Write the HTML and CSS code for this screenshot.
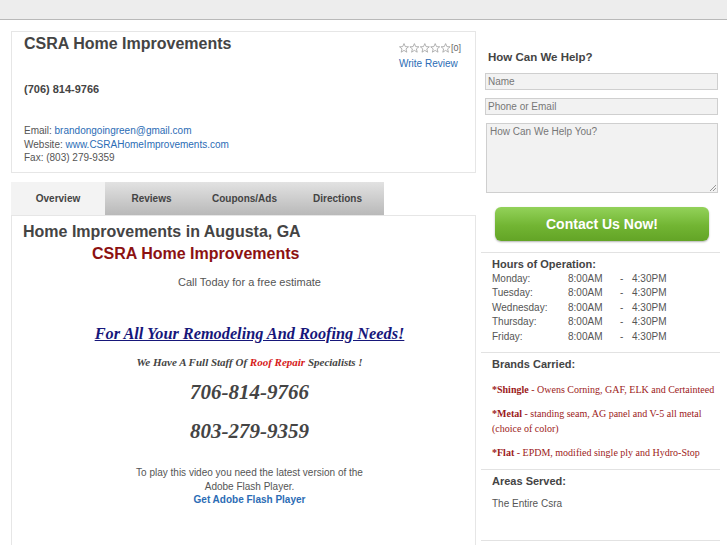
FILE: index.html
```html
<!DOCTYPE html>
<html>
<head>
<meta charset="utf-8">
<link rel="stylesheet" href="styles.css">
</head>
<body>
<div class="topbar"></div>
<div class="page">
  <div class="main">
    <div class="biz-box">
      <div class="biz-head">
        <h1 class="biz-title">CSRA Home Improvements</h1>
        <div class="rating">
          <div class="stars-row">
            <svg class="stars" width="52" height="10" viewBox="0 0 52 10">
              <g fill="none" stroke="#a0a0a0" stroke-width="0.8">
                <polygon points="5,0.6 6.3,3.6 9.5,3.8 7,5.9 7.8,9.2 5,7.4 2.2,9.2 3,5.9 0.5,3.8 3.7,3.6"/>
                <polygon transform="translate(10.4 0)" points="5,0.6 6.3,3.6 9.5,3.8 7,5.9 7.8,9.2 5,7.4 2.2,9.2 3,5.9 0.5,3.8 3.7,3.6"/>
                <polygon transform="translate(20.8 0)" points="5,0.6 6.3,3.6 9.5,3.8 7,5.9 7.8,9.2 5,7.4 2.2,9.2 3,5.9 0.5,3.8 3.7,3.6"/>
                <polygon transform="translate(31.2 0)" points="5,0.6 6.3,3.6 9.5,3.8 7,5.9 7.8,9.2 5,7.4 2.2,9.2 3,5.9 0.5,3.8 3.7,3.6"/>
                <polygon transform="translate(41.6 0)" points="5,0.6 6.3,3.6 9.5,3.8 7,5.9 7.8,9.2 5,7.4 2.2,9.2 3,5.9 0.5,3.8 3.7,3.6"/>
              </g>
            </svg><span class="count">[0]</span>
          </div>
          <a class="link write" href="#">Write Review</a>
        </div>
      </div>
      <div class="biz-phone">(706) 814-9766</div>
      <div class="biz-contact">
        <div>Email: <a class="link" href="#">brandongoingreen@gmail.com</a></div>
        <div>Website: <a class="link" href="#">www.CSRAHomeImprovements.com</a></div>
        <div>Fax: (803) 279-9359</div>
      </div>
    </div>

    <ul class="tabs">
      <li class="tab active">Overview</li>
      <li class="tab">Reviews</li>
      <li class="tab">Coupons/Ads</li>
      <li class="tab">Directions</li>
    </ul>
    <div class="content">
      <h2 class="content-title">Home Improvements in Augusta, GA</h2>
      <h3 class="content-name">CSRA Home Improvements</h3>
      <div class="center">
        <p class="call">Call Today for a free estimate</p>
        <p class="needs">For All Your Remodeling And Roofing Needs!</p>
        <p class="staff">We Have A Full Staff Of <span class="red">Roof Repair</span> Specialists !</p>
        <p class="bigphone">706-814-9766</p>
        <p class="bigphone">803-279-9359</p>
        <p class="flash">To play this video you need the latest version of the<br>Adobe Flash Player.<br><a class="flash-link" href="#">Get Adobe Flash Player</a></p>
      </div>
    </div>
  </div>

  <div class="side">
    <h4 class="side-h help-h">How Can We Help?</h4>
    <div class="form">
      <div class="field">Name</div>
      <div class="field">Phone or Email</div>
      <div class="field area">How Can We Help You?<span class="grip"></span></div>
      <div class="btn">Contact Us Now!</div>
    </div>
    <div class="section">
      <h4 class="side-h">Hours of Operation:</h4>
      <div class="hours">
        <span>Monday:</span><span>8:00AM</span><span>-</span><span>4:30PM</span>
        <span>Tuesday:</span><span>8:00AM</span><span>-</span><span>4:30PM</span>
        <span>Wednesday:</span><span>8:00AM</span><span>-</span><span>4:30PM</span>
        <span>Thursday:</span><span>8:00AM</span><span>-</span><span>4:30PM</span>
        <span>Friday:</span><span>8:00AM</span><span>-</span><span>4:30PM</span>
      </div>
    </div>
    <div class="section">
      <h4 class="side-h">Brands Carried:</h4>
      <div class="brands">
        <p><b>*Shingle</b> - Owens Corning, GAF, ELK and Certainteed</p>
        <p><b>*Metal</b> - standing seam, AG panel and V-5 all metal (choice of color)</p>
        <p><b>*Flat</b> - EPDM, modified single ply and Hydro-Stop</p>
      </div>
    </div>
    <div class="section">
      <h4 class="side-h">Areas Served:</h4>
      <p class="areas">The Entire Csra</p>
    </div>
  </div>
</div>
</body>
</html>
```

FILE: styles.css
```css
* { box-sizing: border-box; }
body {
  margin: 0;
  background: #fff;
  font-family: "Liberation Sans", Arial, sans-serif;
  color: #555;
  font-size: 11px;
}
p, h1, h2, h3, h4, ul { margin: 0; padding: 0; }
.topbar {
  height: 20px;
  background: #ededed;
  border-bottom: 1px solid #b9b9b9;
}
.page {
  display: flex;
  width: 727px;
}
.main {
  width: 465px;
  margin-left: 11px;
  margin-top: 11px;
}
.link { color: #2b6cb5; text-decoration: none; }

.biz-box {
  height: 142px;
  border: 1px solid #e6e6e6;
  padding: 2px 12px 0 12px;
}
.biz-head {
  display: flex;
  justify-content: space-between;
}
.biz-title {
  font-size: 16px;
  line-height: 20px;
  color: #444;
  font-weight: bold;
}
.rating {
  margin-top: 8px;
  width: 64px;
  font-size: 10px;
}
.stars-row {
  display: flex;
  align-items: center;
  height: 11px;
  color: #666;
}
.stars { display: block; }
.count { font-size: 9px; color: #666; }
.write { display: block; margin-top: 5px; font-size: 10px; line-height: 12px; }
.biz-phone {
  margin-top: 12px;
  font-size: 11px;
  font-weight: bold;
  color: #444;
  line-height: 14px;
}
.biz-contact {
  margin-top: 28px;
  font-size: 10px;
  line-height: 13.5px;
}

.tabs {
  list-style: none;
  display: flex;
  margin-top: 9px;
  width: 373px;
}
.tab {
  width: 93px;
  height: 33px;
  line-height: 34px;
  text-align: center;
  font-weight: bold;
  font-size: 10px;
  color: #444;
  background: linear-gradient(#e2e2e2, #b9b9b9);
}
.tab.active {
  width: 94px;
  background: #f3f3f3;
}
.content {
  border: 1px solid #e6e6e6;
  border-bottom: none;
  height: 330px;
  padding: 6px 0 0 11px;
}
.content-title {
  font-size: 16px;
  line-height: 20px;
  color: #444;
  font-weight: bold;
}
.content-name {
  margin-top: 2px;
  padding-left: 69px;
  font-size: 16px;
  line-height: 20px;
  color: #8c1111;
  font-weight: bold;
}
.center {
  text-align: center;
  padding-left: 2px;
  padding-right: 1px;
}
.call { margin-top: 11px; font-size: 11px; line-height: 14px; }
.needs {
  margin-top: 35px;
  font-family: "Liberation Serif", "Times New Roman", serif;
  font-style: italic;
  font-weight: bold;
  font-size: 16.3px;
  line-height: 20px;
  color: #17177a;
  text-decoration: underline;
}
.staff {
  margin-top: 11px;
  font-family: "Liberation Serif", "Times New Roman", serif;
  font-style: italic;
  font-weight: bold;
  font-size: 11px;
  line-height: 14px;
  color: #444;
}
.red { color: #d61a1a; }
.bigphone {
  font-family: "Liberation Serif", "Times New Roman", serif;
  font-style: italic;
  font-weight: bold;
  font-size: 21px;
  line-height: 26px;
  color: #444;
  margin-top: 10px;
}
.bigphone + .bigphone { margin-top: 13px; }
.flash {
  margin-top: 22px;
  font-size: 10px;
  line-height: 13.5px;
}
.flash-link { color: #2b6cb5; font-weight: bold; text-decoration: none; }

.side {
  width: 239px;
  margin-left: 5px;
  margin-top: 30px;
}
.side-h {
  font-size: 11px;
  font-weight: bold;
  color: #444;
  line-height: 14px;
}
.help-h { margin-left: 7px; font-size: 11.5px; }
.form {
  margin-top: 9px;
  padding-bottom: 11px;
  border-bottom: 1px solid #e2e2e2;
}
.field {
  margin-left: 4px;
  width: 233px;
  height: 17px;
  border: 1px solid #cfcfcf;
  background: #f2f2f2;
  color: #777;
  font-size: 10px;
  line-height: 15px;
  padding-left: 2px;
  margin-bottom: 8px;
}
.field.area {
  position: relative;
  height: 70px;
  margin-left: 5px;
  width: 232px;
  padding-left: 3px;
}
.grip {
  position: absolute;
  right: 1px;
  bottom: 1px;
  width: 6px;
  height: 6px;
  background: linear-gradient(135deg, transparent 45%, #999 45%, #999 55%, transparent 55%, transparent 70%, #999 70%, #999 80%, transparent 80%);
}
.btn {
  margin: 14px 0 0 14px;
  width: 214px;
  height: 34px;
  border-radius: 6px;
  background: linear-gradient(#93d25a, #72b533 55%, #63a426);
  box-shadow: 0 1px 2px rgba(0,0,0,0.3);
  color: #fff;
  font-weight: bold;
  font-size: 14px;
  line-height: 34px;
  text-align: center;
}
.section {
  padding: 4px 0 8px 11px;
  border-bottom: 1px solid #e2e2e2;
}
.hours {
  display: grid;
  grid-template-columns: 76px 52px 12px auto;
  font-size: 10px;
  line-height: 14.4px;
  margin-top: 1px;
}
.brands {
  margin-top: 11px;
  font-family: "Liberation Serif", "Times New Roman", serif;
  font-size: 10px;
  color: #9c1a1a;
  line-height: 15px;
}
.brands p { margin-bottom: 9px; }
.brands p:last-child { margin-bottom: 1px; }
.areas {
  margin-top: 9px;
  font-size: 10px;
  line-height: 14px;
  height: 35px;
}
```
